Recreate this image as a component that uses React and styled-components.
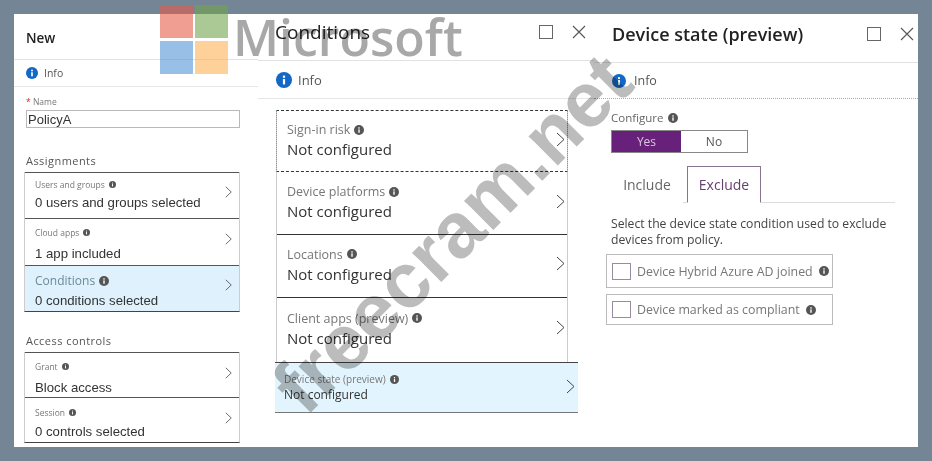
import React from "react";
import styled, { createGlobalStyle } from "styled-components";

const InfoIcon = ({ size = 10, color = "#555" }) => (
  <svg width={size} height={size} viewBox="0 0 16 16" style={{ flex: "none" }}>
    <circle cx="8" cy="8" r="8" fill={color} />
    <rect x="6.9" y="7" width="2.2" height="5.4" fill="#fff" />
    <rect x="6.9" y="3.6" width="2.2" height="2.2" fill="#fff" />
  </svg>
);

const Chevron = ({ w = 9, h = 15, lift = 2 }) => (
  <ChevronSlot $lift={lift} viewBox="0 0 9 15" width={w} height={h} fill="none" preserveAspectRatio="none">
    <path d="M1 1l7 6.5L1 14" stroke="#444" strokeWidth="1" />
  </ChevronSlot>
);

const CloseIcon = () => (
  <svg width="14" height="14" viewBox="0 0 14 14" fill="none">
    <path d="M1 1l12 12M13 1L1 13" stroke="#555" strokeWidth="1.1" />
  </svg>
);

const MaxIcon = () => (
  <svg width="14" height="14" viewBox="0 0 14 14" fill="none">
    <rect x="0.5" y="0.5" width="13" height="13" stroke="#666" />
  </svg>
);

// one entry of the left blade
const LeftItem = ({ label, value, big, height, gap, shift = 0, pull = 0, lift, active }) => (
  <LeftRow $height={height} $shift={shift} $pull={pull} $active={active}>
    <RowText $gap={gap}>
      <RowLabel $size={big ? 12 : 8.5} $active={active}>
        {label} <InfoIcon size={big ? 10 : 7} />
      </RowLabel>
      <LeftValue>{value}</LeftValue>
    </RowText>
    <Chevron w={7} h={12} lift={lift} />
  </LeftRow>
);

const ConditionItem = ({ label, height, dark }) => (
  <ConditionRow $height={height} $dark={dark}>
    <RowText $gap={4}>
      <RowLabel $size={12.5}>
        {label} <InfoIcon size={10} />
      </RowLabel>
      <ConditionValue>Not configured</ConditionValue>
    </RowText>
    <Chevron />
  </ConditionRow>
);

export default function App() {
  return (
    <>
      <Global />
      <Page>
        <Panel>
          <Header $height={46} $left={12} $bottom={0} $top={2}>
            <Title $size={13.5} $weight={600}>New</Title>
          </Header>
          <InfoRow $height={27} $left={12} $size={10.5} $gap={6}>
            <InfoIcon size={12} color="#1268c4" /> Info
          </InfoRow>
          <LeftBody>
            <NameLabel><Star>*</Star> Name</NameLabel>
            <NameInput defaultValue="PolicyA" />
            <SectionLabel $top={27}>Assignments</SectionLabel>
            <LeftList $top={6}>
              <LeftItem label="Users and groups" value="0 users and groups selected" height={46} gap={2} pull={4} lift={3} />
              <LeftItem label="Cloud apps" value="1 app included" height={47} gap={5} shift={3} lift={9} />
              <LeftItem label="Conditions" value="0 conditions selected" height={46} gap={4} shift={5} lift={13} big active />
            </LeftList>
            <SectionLabel $top={23}>Access controls</SectionLabel>
            <LeftList $top={6}>
              <LeftItem label="Grant" value="Block access" height={45} gap={5} shift={4} lift={9} />
              <LeftItem label="Session" value="0 controls selected" height={45} gap={3} shift={4} lift={9} />
            </LeftList>
          </LeftBody>
        </Panel>

        <Panel>
          <Header $height={47} $left={17} $bottom={11}>
            <Title $size={19} $weight={500}>Conditions</Title>
            <Actions $right={-8}><MaxIcon /><CloseIcon /></Actions>
          </Header>
          <InfoRow $height={38} $left={18} $size={13} $gap={6}>
            <InfoIcon size={16} color="#1268c4" /> Info
          </InfoRow>
          <ConditionList>
            <FocusBox>
              <ConditionItem label="Sign-in risk" height={60} />
            </FocusBox>
            <ConditionItem label="Device platforms" height={62} />
            <ConditionItem label="Locations" height={63} dark />
            <ConditionItem label="Client apps (preview)" height={65} dark />
            <SelectedRow>
              <RowText $gap={0}>
                <RowLabel $size={10}>Device state (preview) <InfoIcon size={9} /></RowLabel>
                <SelectedValue>Not configured</SelectedValue>
              </RowText>
              <Chevron />
            </SelectedRow>
          </ConditionList>
        </Panel>

        <Panel>
          <Header $height={49} $left={18} $bottom={8}>
            <Title $size={18} $weight={600}>Device state (preview)</Title>
            <Actions $right={-12}><MaxIcon /><CloseIcon /></Actions>
          </Header>
          <InfoRow $height={36} $left={18} $size={12.5} $gap={8} $dotted>
            <InfoIcon size={14} color="#1268c4" /> Info
          </InfoRow>
          <RightBody>
            <ConfigureLabel>Configure <InfoIcon size={10} /></ConfigureLabel>
            <Toggle>
              <ToggleOption $on>Yes</ToggleOption>
              <ToggleOption>No</ToggleOption>
            </Toggle>
            <Tabs>
              <Tab>Include</Tab>
              <Tab $selected>Exclude</Tab>
            </Tabs>
            <Description>
              Select the device state condition used to exclude devices from policy.
            </Description>
            <CheckRow $height={34}>
              <CheckBox /> Device Hybrid Azure AD joined <InfoIcon size={10} />
            </CheckRow>
            <CheckRow $height={31}>
              <CheckBox /> Device marked as compliant <InfoIcon size={10} />
            </CheckRow>
          </RightBody>
        </Panel>

        <LogoMark>
          <LogoTile $color="rgb(230,92,73)" />
          <LogoTile $color="rgb(113,165,77)" />
          <LogoTile $color="rgb(84,150,214)" />
          <LogoTile $color="rgb(253,178,88)" />
        </LogoMark>
        <Brand>Microsoft</Brand>
        <Stamp>freecram.net</Stamp>
      </Page>
    </>
  );
}

const Global = createGlobalStyle`
  html, body {
    margin: 0;
    height: 100%;
    background: #748596;
    overflow: hidden;
  }
  * {
    box-sizing: border-box;
  }
`;

const Page = styled.div`
  position: relative;
  width: 932px;
  height: 461px;
  padding: 14px;
  display: grid;
  grid-template-columns: 244px 336px 324px;
  font-family: "Open Sans", "Noto Sans", sans-serif;
  color: #333;
`;

const Panel = styled.section`
  background: #fff;
  height: 433px;
`;

const Header = styled.header`
  height: ${(p) => p.$height}px;
  padding: ${(p) => p.$top || 0}px 16px ${(p) => p.$bottom}px ${(p) => p.$left}px;
  display: flex;
  align-items: center;
  justify-content: space-between;
  border-bottom: 1px solid #e2e2e2;
`;

const Title = styled.h1`
  margin: 0;
  font-size: ${(p) => p.$size}px;
  font-weight: ${(p) => p.$weight};
  color: #222;
`;

const Actions = styled.div`
  display: flex;
  gap: 19px;
  align-items: center;
  margin-right: ${(p) => p.$right}px;
`;

const InfoRow = styled.div`
  height: ${(p) => p.$height}px;
  padding-left: ${(p) => p.$left}px;
  display: flex;
  align-items: center;
  gap: ${(p) => p.$gap}px;
  font-size: ${(p) => p.$size}px;
  color: #555;
  border-bottom: 1px ${(p) => (p.$dotted ? "dotted #8fb8bd" : "solid #e6e6e6")};
`;

const LeftBody = styled.div`
  padding: 9px 0 0 12px;
`;

const NameLabel = styled.div`
  font-size: 8.5px;
  line-height: 11px;
  height: 14px;
  color: #777;
`;

const Star = styled.span`
  color: #c03030;
`;

const NameInput = styled.input`
  display: block;
  width: 214px;
  height: 18px;
  padding: 0 1px;
  border: 1px solid #b9b9b9;
  outline: none;
  font-family: "Liberation Sans", Arial, sans-serif;
  font-size: 13px;
  color: #333;
`;

const SectionLabel = styled.div`
  margin-top: ${(p) => p.$top}px;
  font-size: 11px;
  line-height: 11px;
  height: 11px;
  letter-spacing: 0.45px;
  color: #555;
`;

const LeftList = styled.div`
  margin: ${(p) => p.$top}px 0 0 -2px;
  width: 216px;
  border-left: 1px solid #ccc;
  border-right: 1px solid #ccc;
  border-bottom: 1px solid #444;
`;

const LeftRow = styled.div`
  height: ${(p) => p.$height}px;
  padding: ${(p) => p.$shift}px 7px ${(p) => p.$pull}px 10px;
  display: flex;
  align-items: center;
  justify-content: space-between;
  background: ${(p) => (p.$active ? "#dff1fc" : "transparent")};
  border-top: 1px solid #555;
`;

const RowText = styled.div`
  display: flex;
  flex-direction: column;
  gap: ${(p) => p.$gap}px;
`;

const RowLabel = styled.div`
  display: flex;
  align-items: center;
  gap: 4px;
  font-size: ${(p) => p.$size}px;
  line-height: 15px;
  color: ${(p) => (p.$active ? "#6b8a9a" : "#777")};
`;

const LeftValue = styled.div`
  font-family: "Liberation Sans", Arial, sans-serif;
  font-size: 13.2px;
  line-height: 17px;
  color: #333;
`;

const ChevronSlot = styled.svg`
  flex: none;
  margin-bottom: ${(p) => p.$lift}px;
`;

const ConditionList = styled.div`
  width: 292px;
  margin: 11px 0 0 18px;
  border-left: 1px solid #ccc;
  border-right: 1px solid #ccc;
`;

const ConditionRow = styled.div`
  height: ${(p) => p.$height}px;
  padding: 0 2px 3px 10px;
  display: flex;
  align-items: center;
  justify-content: space-between;
  border-top: 1px solid ${(p) => (p.$dark ? "#333" : "transparent")};
`;

const ConditionValue = styled.div`
  font-size: 15px;
  line-height: 17px;
  color: #333;
`;

const FocusBox = styled.div`
  margin: 0 -1px;
  border: 1px dotted #5aa7ad;
  border-top: 1px dashed #333;
  border-bottom: 1px dashed #333;
`;

const SelectedRow = styled.div`
  height: 51px;
  width: 303px;
  margin-left: -2px;
  padding: 0 3px 1px 9px;
  display: flex;
  align-items: center;
  justify-content: space-between;
  background: #e2f4fd;
  border-top: 1px solid #444;
  border-bottom: 1px solid #777;
`;

const SelectedValue = styled.div`
  font-size: 12px;
  line-height: 15px;
  color: #333;
`;

const RightBody = styled.div`
  padding: 11px 23px 0 17px;
`;

const ConfigureLabel = styled.div`
  display: flex;
  align-items: center;
  gap: 5px;
  font-size: 11.5px;
  line-height: 16px;
  height: 16px;
  color: #666;
`;

const Toggle = styled.div`
  margin-top: 4px;
  width: 137px;
  height: 23px;
  display: grid;
  grid-template-columns: 69px 1fr;
  border: 1px solid #888;
`;

const ToggleOption = styled.div`
  display: flex;
  align-items: center;
  justify-content: center;
  font-size: 12px;
  background: ${(p) => (p.$on ? "#68217a" : "#fff")};
  color: ${(p) => (p.$on ? "#d8c8dd" : "#555")};
`;

const Tabs = styled.div`
  margin-top: 14px;
  height: 36px;
  display: flex;
  align-items: flex-end;
  gap: 4px;
  border-bottom: 1px solid #ddd;
`;

const Tab = styled.div`
  height: 37px;
  width: ${(p) => (p.$selected ? "74px" : "72px")};
  margin-bottom: -1px;
  display: flex;
  align-items: center;
  justify-content: center;
  font-size: 14px;
  color: ${(p) => (p.$selected ? "#68406f" : "#666")};
  background: #fff;
  border: ${(p) => (p.$selected ? "1px solid #8a7390" : "none")};
  border-bottom: ${(p) => (p.$selected ? "1px solid #fff" : "none")};
`;

const Description = styled.p`
  margin: 13px 0 0;
  width: 284px;
  font-size: 12.2px;
  line-height: 16px;
  color: #444;
`;

const CheckRow = styled.div`
  margin: 6px 0 0 -5px;
  width: 227px;
  height: ${(p) => p.$height}px;
  padding: 0 5px;
  display: flex;
  align-items: center;
  gap: 6px;
  font-size: 12.4px;
  white-space: nowrap;
  color: #777;
  border: 1px solid #bbb;
`;

const CheckBox = styled.span`
  width: 19px;
  height: 17px;
  flex: none;
  border: 1px solid #9a8ca0;
`;

const LogoMark = styled.div`
  position: absolute;
  left: 160px;
  top: 5px;
  width: 68px;
  display: grid;
  grid-template-columns: 33px 33px;
  grid-auto-rows: 33px;
  column-gap: 2px;
  row-gap: 3px;
  pointer-events: none;
`;

const LogoTile = styled.span`
  background: ${(p) => p.$color};
  opacity: 0.6;
`;

const Brand = styled.div`
  position: absolute;
  left: 233px;
  top: 3px;
  font-family: "Open Sans", sans-serif;
  font-size: 50px;
  font-weight: 600;
  line-height: 68px;
  color: #a8a8a8;
  mix-blend-mode: multiply;
  pointer-events: none;
`;

const Stamp = styled.div`
  position: absolute;
  left: 452px;
  top: 233px;
  transform: translate(-50%, -50%) rotate(-45deg);
  font-family: "Liberation Sans", Arial, sans-serif;
  font-size: 78px;
  font-weight: 700;
  line-height: 1;
  white-space: nowrap;
  color: #bcbcbc;
  mix-blend-mode: multiply;
  pointer-events: none;
`;
